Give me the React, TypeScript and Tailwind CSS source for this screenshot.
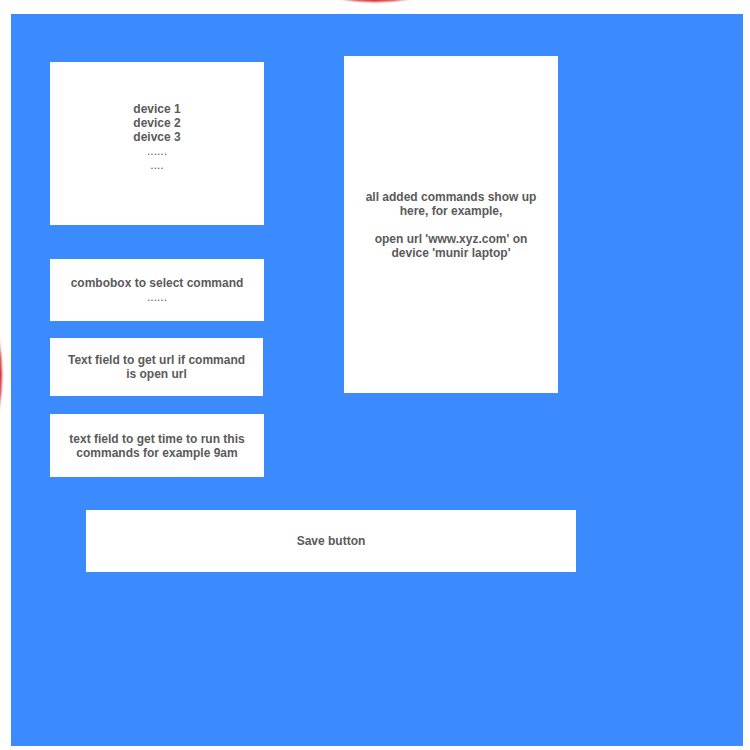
import React from 'react';

const Card: React.FC<{ className?: string; children: React.ReactNode }> = ({ className = '', children }) => (
  <div
    className={`bg-white flex items-center justify-center text-center text-[12px] leading-[14px] font-bold text-[#5a5a5a] ${className}`}
  >
    <div>{children}</div>
  </div>
);

export default function App() {
  return (
    <div
      className="relative w-[750px] h-[750px] bg-white overflow-hidden"
      style={{ fontFamily: '"Liberation Sans", Arial, sans-serif' }}
    >
      {/* red blobs peeking in from the edges */}
      <div className="absolute left-[192px] top-[-364px] w-[366px] h-[366px] rounded-full bg-[#d3262c] blur-[1px]" />
      <div className="absolute top-[192px] left-[-364px] w-[366px] h-[366px] rounded-full bg-[#d3262c] blur-[1px]" />

      <div className="relative ml-[11px] mt-[14px] w-[732px] h-[732px] bg-[#3b8bff] pt-[42px] pl-[39px]">
        <div className="flex items-start gap-[80px]">
          <div className="mt-[6px] w-[214px] flex flex-col">
            <Card className="h-[163px]">
              device 1<br />
              device 2<br />
              deivce 3<br />
              <span className="font-normal">......</span>
              <br />
              <span className="font-normal">....</span>
              <br />
              &nbsp;
            </Card>
            <Card className="h-[62px] mt-[34px]">
              combobox to select command
              <br />
              <span className="font-normal">......</span>
            </Card>
            <Card className="h-[58px] mt-[17px] w-[213px]">
              Text field to get url if command
              <br />
              is open url
            </Card>
            <Card className="h-[63px] mt-[18px]">
              text field to get time to run this
              <br />
              commands for example 9am
            </Card>
          </div>
          <Card className="w-[214px] h-[337px]">
            all added commands show up
            <br />
            here, for example,
            <br />
            <br />
            open url 'www.xyz.com' on
            <br />
            device 'munir laptop'
          </Card>
        </div>
        <Card className="ml-[36px] mt-[33px] w-[490px] h-[62px]">Save button</Card>
      </div>
    </div>
  );
}
